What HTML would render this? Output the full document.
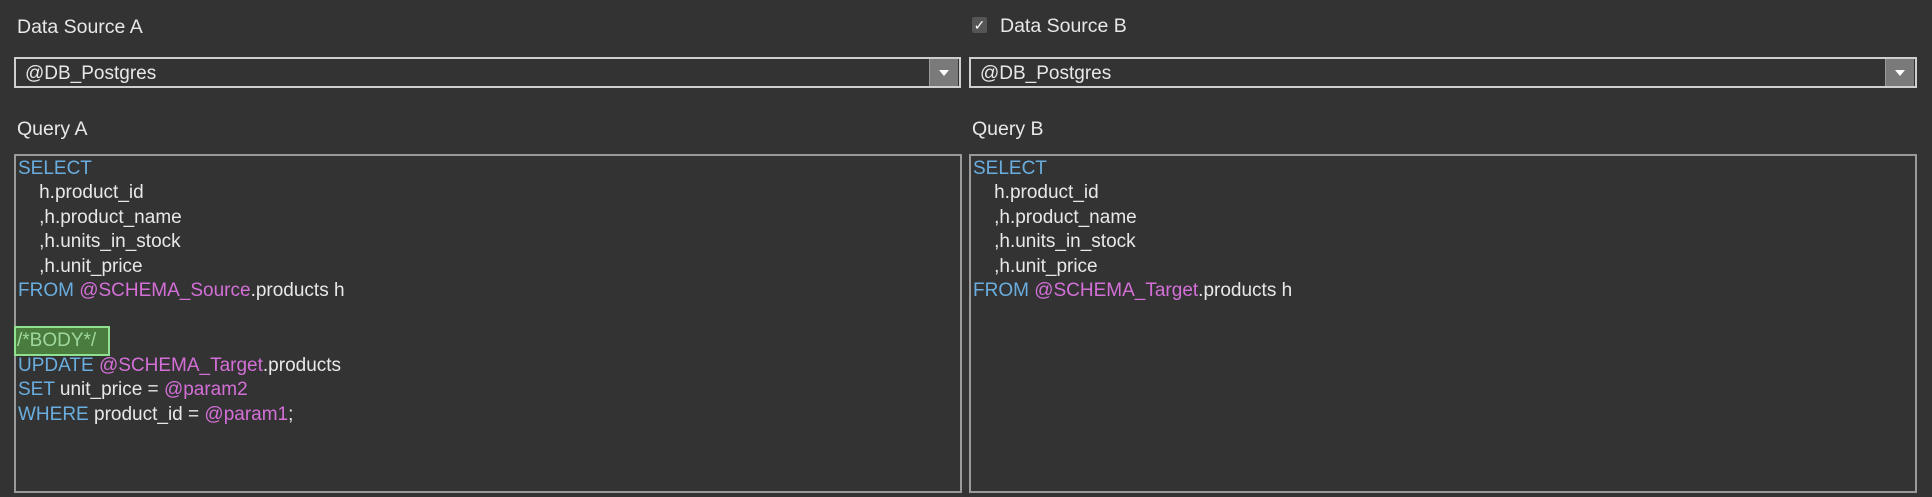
<!DOCTYPE html>
<html><head><meta charset="utf-8"><style>
body{margin:0;width:1932px;height:497px;background:#333333;overflow:hidden;font-family:"Liberation Sans",sans-serif;color:#e8e8e8;position:relative}
.abs{position:absolute}
.lbl{font-size:19.5px;line-height:22px}
.combo{position:absolute;height:31px;border:2px solid #cfcfcf;box-sizing:border-box;background:#333}
.combo span{position:absolute;left:9px;top:4px;font-size:19px}
.btn{position:absolute;right:1px;top:0;width:28px;height:27px;background:#7a7a7a;border-left:1px solid #999}
.btn:after{content:"";position:absolute;left:9px;top:11px;border-left:5px solid transparent;border-right:5px solid transparent;border-top:6px solid #fff}
.ed{position:absolute;top:154px;height:339px;border:2px solid #9a9a9a;box-sizing:border-box}
.code{position:absolute;left:2px;top:1px;font-size:19px;line-height:24.4px;white-space:pre}
.k{color:#6aaee0}.v{color:#d46fd8}
.body{background:#4a7c3e;outline:2px solid #8fe08f;color:#9fd89f;display:inline-block;padding:0 12px 0 1px;margin-left:-2px;line-height:26px}
</style></head><body>
<div class="abs lbl" style="left:17px;top:16px">Data Source A</div>
<div class="abs" style="left:972px;top:17px;width:15px;height:16px;background:#555;border-radius:2px;color:#fff;font-size:14px;line-height:16px;text-align:center">✓</div>
<div class="abs lbl" style="left:1000px;top:15px">Data Source B</div>
<div class="combo" style="left:14px;top:57px;width:947px"><span>@DB_Postgres</span><div class="btn"></div></div>
<div class="combo" style="left:969px;top:57px;width:948px"><span>@DB_Postgres</span><div class="btn"></div></div>
<div class="abs lbl" style="left:17px;top:118px">Query A</div>
<div class="abs lbl" style="left:972px;top:118px">Query B</div>
<div class="ed" style="left:14px;width:948px"><div class="code"><span class="k">SELECT</span>
    h.product_id
    ,h.product_name
    ,h.units_in_stock
    ,h.unit_price
<span class="k">FROM</span> <span class="v">@SCHEMA_Source</span>.products h

<span class="body">/*BODY*/</span>
<span class="k">UPDATE</span> <span class="v">@SCHEMA_Target</span>.products
<span class="k">SET</span> unit_price = <span class="v">@param2</span>
<span class="k">WHERE</span> product_id = <span class="v">@param1</span>;</div></div>
<div class="ed" style="left:969px;width:948px"><div class="code"><span class="k">SELECT</span>
    h.product_id
    ,h.product_name
    ,h.units_in_stock
    ,h.unit_price
<span class="k">FROM</span> <span class="v">@SCHEMA_Target</span>.products h</div></div>
</body></html>
